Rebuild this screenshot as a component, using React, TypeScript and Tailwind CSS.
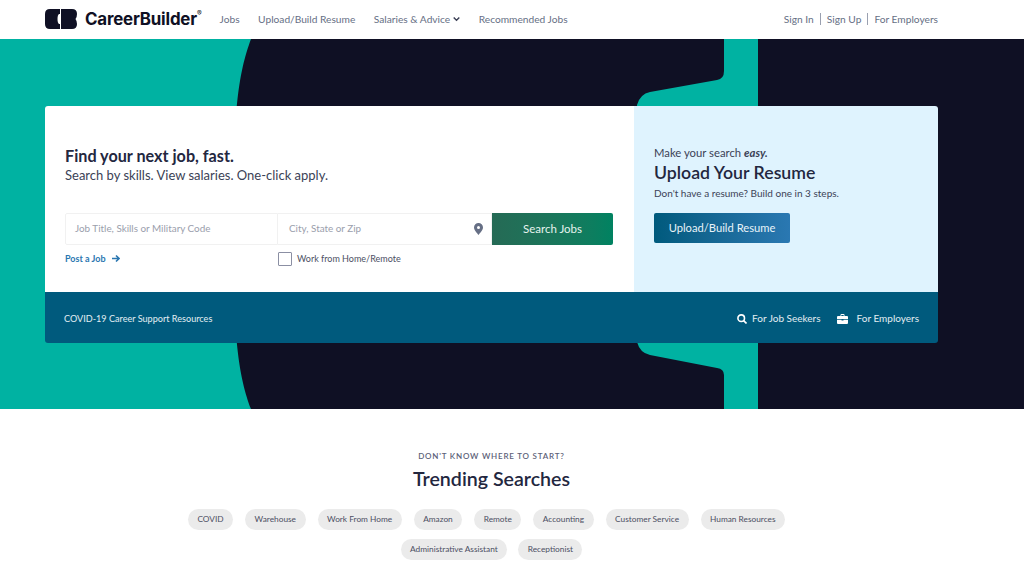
import React from 'react';

const chipsTop = ['COVID', 'Warehouse', 'Work From Home', 'Amazon', 'Remote', 'Accounting', 'Customer Service', 'Human Resources'];
const chipsBottom = ['Administrative Assistant', 'Receptionist'];

const Chip = ({ label }: { label: string }) => (
  <a className="flex h-[21px] items-center rounded-full bg-[#ebebeb] px-[9.5px] text-[8.3px] text-[#4b4f63]">{label}</a>
);

// hero backdrop: dark arc shape with the teal strip cut through it
const HeroShape = () => (
  <svg className="absolute inset-0" width="1024" height="370" viewBox="0 0 1024 370">
    <rect width="1024" height="370" fill="#00b2a2" />
    <path d="M251 0 C238 35 233 75 233 185 C233 295 238 335 251 370 L724 370 L724 336 Q724 330 717 329 L650 316 Q640 314 637 303 L637 66 Q640 55 650 53 L717 41 Q724 40 724 32 L724 0 Z" fill="#0f1024" />
    <rect x="758" width="266" height="370" fill="#0f1024" />
  </svg>
);

const Logo = () => (
  <svg width="32" height="20" viewBox="0 0 32 20" fill="#0f1024">
    <path d="M5 0 H15 V5 H14 Q12.5 6 12.5 10 Q12.5 14 14 15 H15 V20 H5 Q0 20 0 15 V5 Q0 0 5 0 Z" />
    <path d="M16 0 H27 Q32 0 32 5 Q32 8 30.5 10 Q32 12 32 15 Q32 20 27 20 H16 Z" />
  </svg>
);

export default function App() {
  return (
    <div className="min-h-[572px] overflow-hidden bg-white font-['Lato','Liberation_Sans',sans-serif]">
      <header className="flex h-[39px] items-center pl-[45px] pr-[86px] text-[10.2px] text-[#666f85]">
        <div className="flex items-center">
          <Logo />
          <span className="ml-[8px] font-['Inter',sans-serif] text-[16.9px] font-bold tracking-[-0.2px] text-[#0f1024]">CareerBuilder</span>
          <span className="mb-[10px] font-['Inter',sans-serif] text-[7px] text-[#0f1024]">®</span>
        </div>
        <nav className="ml-[18px] flex items-center gap-[18.5px]">
          <a>Jobs</a>
          <a>Upload/Build Resume</a>
          <a className="flex items-center gap-[3px]">
            Salaries &amp; Advice
            <svg width="7" height="8" viewBox="0 0 7 8" fill="none" stroke="#3b3f55" strokeWidth="1.4">
              <path d="M0.7 2.5 L3.5 5.3 L6.3 2.5" />
            </svg>
          </a>
          <a>Recommended Jobs</a>
        </nav>
        <div className="ml-auto flex items-center">
          <a>Sign In</a>
          <span className="mx-[6px] h-[12px] w-px bg-[#9aa0b0]" />
          <a>Sign Up</a>
          <span className="mx-[6px] h-[12px] w-px bg-[#9aa0b0]" />
          <a>For Employers</a>
        </div>
      </header>

      <section className="relative h-[370px] pl-[45px] pt-[67px]">
        <HeroShape />
        <div className="relative w-[893px] overflow-hidden rounded-[3px]">
          <div className="flex h-[186px]">
            <div className="w-[589px] bg-white pl-[20px] pt-[40px]">
              <h1 className="text-[16.2px] font-bold leading-[20px] text-[#23273f]">Find your next job, fast.</h1>
              <p className="text-[13px] leading-[19px] text-[#3b4256]">Search by skills. View salaries. One-click apply.</p>
              <div className="mt-[28px] flex h-[32px] w-[548px]">
                <div className="flex w-[213px] items-center rounded-l-[2px] border border-[#f1f1f1] pb-[1px] pl-[9px] text-[9.9px] text-[#9a9eac]">Job Title, Skills or Military Code</div>
                <div className="flex w-[214px] items-center justify-between border border-l-0 border-[#f1f1f1] pb-[1px] pl-[11px] pr-[8px] text-[9.9px] text-[#9a9eac]">
                  City, State or Zip
                  <svg width="9" height="12" viewBox="0 0 9 12" fill="#666f85">
                    <path fillRule="evenodd" d="M4.5 0 A4.5 4.5 0 0 1 9 4.5 C9 7 6 10 4.5 12 C3 10 0 7 0 4.5 A4.5 4.5 0 0 1 4.5 0 Z M4.5 3 A1.5 1.5 0 1 0 4.5 6 A1.5 1.5 0 1 0 4.5 3 Z" />
                  </svg>
                </div>
                <button className="w-[121px] rounded-r-[2px] bg-gradient-to-r from-[#256a55] to-[#008261] text-[11.5px] text-[#e6f3ee]">Search Jobs</button>
              </div>
              <div className="mt-[7px] flex">
                <a className="flex w-[213px] items-start gap-[6px] pt-[1px] text-[9px] font-bold leading-[11px] text-[#2b77b1]">
                  Post a Job
                  <svg width="8" height="11" viewBox="0 0 8 11" fill="none" stroke="#2b77b1" strokeWidth="1.6">
                    <path d="M0 5.5 H7 M4 2.5 L7 5.5 L4 8.5" />
                  </svg>
                </a>
                <label className="flex items-center gap-[5px] text-[9px] text-[#4b4f63]">
                  <span className="h-[14px] w-[14px] rounded-[1px] border border-[#8b8fa3] bg-white" />
                  Work from Home/Remote
                </label>
              </div>
            </div>
            <div className="flex-1 bg-[#dff3fe] pl-[20px] pt-[40px] text-[#23273f]">
              <p className="text-[11.3px] leading-[14px] text-[#3b4256]">Make your search <em className="font-bold">easy.</em></p>
              <h2 className="mt-[1px] text-[17.7px] font-semibold leading-[24px]">Upload Your Resume</h2>
              <p className="mt-[1px] text-[10px] leading-[14px] text-[#3b4256]">Don't have a resume? Build one in 3 steps.</p>
              <button className="mt-[13px] h-[30px] w-[136px] rounded-[2px] bg-gradient-to-r from-[#005a7d] to-[#2a78b2] text-[11.2px] text-[#e8f3f9]">Upload/Build Resume</button>
            </div>
          </div>
          <div className="flex h-[51px] items-center justify-between bg-[#005a7d] pl-[19px] pr-[19px] pt-[2px] text-[#e3eef3]">
            <a className="text-[9.1px]">COVID-19 Career Support Resources</a>
            <div className="flex items-center text-[10px]">
              <svg width="10" height="10" viewBox="0 0 10 10" fill="none" stroke="#fff" strokeWidth="1.6">
                <circle cx="4.2" cy="4.2" r="3.3" />
                <path d="M6.6 6.6 L9.5 9.5" />
              </svg>
              <a className="ml-[5px]">For Job Seekers</a>
              <svg className="ml-[16px]" width="11" height="10" viewBox="0 0 11 10" fill="#fff">
                <path d="M3.5 2 V1 Q3.5 0 4.5 0 H6.5 Q7.5 0 7.5 1 V2 H10 Q11 2 11 3 V5 H0 V3 Q0 2 1 2 Z M4.3 2 H6.7 V1 H4.3 Z" />
                <path d="M0 5.7 H4.5 V6.5 H6.5 V5.7 H11 V9 Q11 10 10 10 H1 Q0 10 0 9 Z" />
              </svg>
              <a className="ml-[9px]">For Employers</a>
            </div>
          </div>
        </div>
      </section>

      <section className="flex w-[983px] flex-col items-center pt-[41px]">
        <p className="text-[8px] font-semibold leading-[12px] tracking-[0.8px] text-[#5c6178]">DON'T KNOW WHERE TO START?</p>
        <h2 className="mt-[4px] text-[19.6px] font-semibold leading-[26px] text-[#23273f]">Trending Searches</h2>
        <div className="mr-[10px] mt-[17px] flex gap-[12px]">
          {chipsTop.map((c) => <Chip key={c} label={c} />)}
        </div>
        <div className="mt-[9px] flex gap-[11px]">
          {chipsBottom.map((c) => <Chip key={c} label={c} />)}
        </div>
      </section>
    </div>
  );
}
